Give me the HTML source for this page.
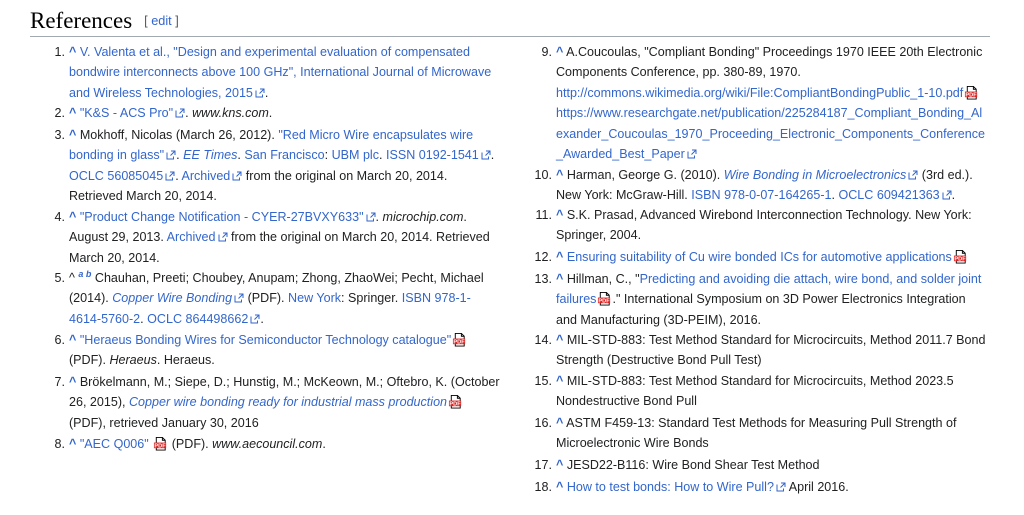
<!DOCTYPE html>
<html><head><meta charset="utf-8"><style>
html,body{margin:0;padding:0;background:#fff;width:1024px;height:515px;overflow:hidden}
body{font-family:"Liberation Sans",Arial,sans-serif;color:#202122;font-size:12.55px}
h2{position:absolute;left:30px;top:6px;margin:0;font-family:"Liberation Serif",Georgia,serif;font-weight:normal;font-size:23px;color:#000;line-height:30px}
.ed{font-family:"Liberation Sans",sans-serif;font-size:12.7px;color:#54595d;margin-left:12px;position:relative;top:-3px}
.hr{position:absolute;left:30px;top:36px;width:960px;height:1px;background:#a2a9b1}
.li{position:absolute;line-height:20.4px;white-space:nowrap}
.n{position:absolute;text-align:right;width:30px}
a{color:#3366cc;text-decoration:none}
.c{color:#3366cc;font-weight:bold}
.e{display:inline-block;width:10px;height:10px;margin-left:2px;vertical-align:-1px}
.p{display:inline-block;width:15px;height:15px;vertical-align:-3px;margin-left:1px}
sup{font-size:9px;line-height:0}
</style></head><body>
<svg width="0" height="0" style="position:absolute"><defs>
<symbol id="ex" viewBox="0 0 10 10"><path d="M1 2.5v6.5h6.5V6.5" fill="none" stroke="#3366cc" stroke-width="1"/><path d="M5 1h4v4M9 1L4.5 5.5" fill="none" stroke="#3366cc" stroke-width="1"/></symbol>
<symbol id="pdf" viewBox="0 0 16 16"><path d="M3.5 1.5h6.5l3 3v10.5h-9.5z" fill="#fff" stroke="#000"/><path d="M10 1.5v3h3" fill="none" stroke="#000"/><rect x="1" y="7" width="13" height="6" fill="#d22"/><text x="7.5" y="12.3" font-size="6" font-family="Liberation Sans" font-weight="bold" fill="#fff" text-anchor="middle">PDF</text></symbol>
</defs></svg>
<h2>References<span class="ed">[ <a>edit</a> ]</span></h2>
<div class="hr"></div>

<div class="li" style="left:69px;top:42px"><span class="n" style="left:-34px">1.</span><span class="c">^</span> <a>V. Valenta et al., "Design and experimental evaluation of compensated<br>bondwire interconnects above 100 GHz", International Journal of Microwave<br>and Wireless Technologies, 2015<svg class="e"><use href="#ex"/></svg></a>.</div>
<div class="li" style="left:69px;top:103px"><span class="n" style="left:-34px">2.</span><span class="c">^</span> <a>"K&amp;S - ACS Pro"<svg class="e"><use href="#ex"/></svg></a>. <i>www.kns.com</i>.</div>
<div class="li" style="left:69px;top:125px"><span class="n" style="left:-34px">3.</span><span class="c">^</span> Mokhoff, Nicolas (March 26, 2012). <a>"Red Micro Wire encapsulates wire<br>bonding in glass"<svg class="e"><use href="#ex"/></svg></a>. <i><a>EE Times</a></i>. <a>San Francisco</a>: <a>UBM plc</a>. <a>ISSN</a> <a>0192-1541<svg class="e"><use href="#ex"/></svg></a>.<br><a>OCLC</a> <a>56085045<svg class="e"><use href="#ex"/></svg></a>. <a>Archived<svg class="e"><use href="#ex"/></svg></a> from the original on March 20, 2014.<br>Retrieved March 20, 2014.</div>
<div class="li" style="left:69px;top:207px"><span class="n" style="left:-34px">4.</span><span class="c">^</span> <a>"Product Change Notification - CYER-27BVXY633"<svg class="e"><use href="#ex"/></svg></a>. <i>microchip.com</i>.<br>August 29, 2013. <a>Archived<svg class="e"><use href="#ex"/></svg></a> from the original on March 20, 2014. Retrieved<br>March 20, 2014.</div>
<div class="li" style="left:69px;top:268px"><span class="n" style="left:-34px">5.</span>^ <sup><a><i><b>a</b></i></a> <a><i><b>b</b></i></a></sup> Chauhan, Preeti; Choubey, Anupam; Zhong, ZhaoWei; Pecht, Michael<br>(2014). <a><i>Copper Wire Bonding</i><svg class="e"><use href="#ex"/></svg></a> (PDF). <a>New York</a>: Springer. <a>ISBN</a> <a>978-1-<br>4614-5760-2</a>. <a>OCLC</a> <a>864498662<svg class="e"><use href="#ex"/></svg></a>.</div>
<div class="li" style="left:69px;top:330px"><span class="n" style="left:-34px">6.</span><span class="c">^</span> <a>"Heraeus Bonding Wires for Semiconductor Technology catalogue"</a><svg class="p"><use href="#pdf"/></svg><br>(PDF). <i>Heraeus</i>. Heraeus.</div>
<div class="li" style="left:69px;top:372px"><span class="n" style="left:-34px">7.</span><span class="c">^</span> Brökelmann, M.; Siepe, D.; Hunstig, M.; McKeown, M.; Oftebro, K. (October<br>26, 2015), <a><i>Copper wire bonding ready for industrial mass production</i></a><svg class="p"><use href="#pdf"/></svg><br>(PDF), retrieved January 30, 2016</div>
<div class="li" style="left:69px;top:434px"><span class="n" style="left:-34px">8.</span><span class="c">^</span> <a>"AEC Q006"</a> <svg class="p"><use href="#pdf"/></svg> (PDF). <i>www.aecouncil.com</i>.</div>

<div class="li" style="left:556px;top:42px"><span class="n" style="left:-34px">9.</span><span class="c">^</span> A.Coucoulas, "Compliant Bonding" Proceedings 1970 IEEE 20th Electronic<br>Components Conference, pp. 380-89, 1970.<br><a>http://commons.wikimedia.org/wiki/File:CompliantBondingPublic_1-10.pdf</a><svg class="p"><use href="#pdf"/></svg><br><a>https://www.researchgate.net/publication/225284187_Compliant_Bonding_Al<br>exander_Coucoulas_1970_Proceeding_Electronic_Components_Conference<br>_Awarded_Best_Paper<svg class="e"><use href="#ex"/></svg></a></div>
<div class="li" style="left:556px;top:165px"><span class="n" style="left:-34px">10.</span><span class="c">^</span> Harman, George G. (2010). <a><i>Wire Bonding in Microelectronics</i><svg class="e"><use href="#ex"/></svg></a> (3rd ed.).<br>New York: McGraw-Hill. <a>ISBN</a> <a>978-0-07-164265-1</a>. <a>OCLC</a> <a>609421363<svg class="e"><use href="#ex"/></svg></a>.</div>
<div class="li" style="left:556px;top:205px"><span class="n" style="left:-34px">11.</span><span class="c">^</span> S.K. Prasad, Advanced Wirebond Interconnection Technology. New York:<br>Springer, 2004.</div>
<div class="li" style="left:556px;top:247px"><span class="n" style="left:-34px">12.</span><span class="c">^</span> <a>Ensuring suitability of Cu wire bonded ICs for automotive applications</a><svg class="p"><use href="#pdf"/></svg></div>
<div class="li" style="left:556px;top:269px"><span class="n" style="left:-34px">13.</span><span class="c">^</span> Hillman, C., "<a>Predicting and avoiding die attach, wire bond, and solder joint<br>failures</a><svg class="p"><use href="#pdf"/></svg>." International Symposium on 3D Power Electronics Integration<br>and Manufacturing (3D-PEIM), 2016.</div>
<div class="li" style="left:556px;top:330px"><span class="n" style="left:-34px">14.</span><span class="c">^</span> MIL-STD-883: Test Method Standard for Microcircuits, Method 2011.7 Bond<br>Strength (Destructive Bond Pull Test)</div>
<div class="li" style="left:556px;top:371px"><span class="n" style="left:-34px">15.</span><span class="c">^</span> MIL-STD-883: Test Method Standard for Microcircuits, Method 2023.5<br>Nondestructive Bond Pull</div>
<div class="li" style="left:556px;top:413px"><span class="n" style="left:-34px">16.</span><span class="c">^</span> ASTM F459-13: Standard Test Methods for Measuring Pull Strength of<br>Microelectronic Wire Bonds</div>
<div class="li" style="left:556px;top:455px"><span class="n" style="left:-34px">17.</span><span class="c">^</span> JESD22-B116: Wire Bond Shear Test Method</div>
<div class="li" style="left:556px;top:477px"><span class="n" style="left:-34px">18.</span><span class="c">^</span> <a>How to test bonds: How to Wire Pull?<svg class="e"><use href="#ex"/></svg></a> April 2016.</div>
</body></html>
